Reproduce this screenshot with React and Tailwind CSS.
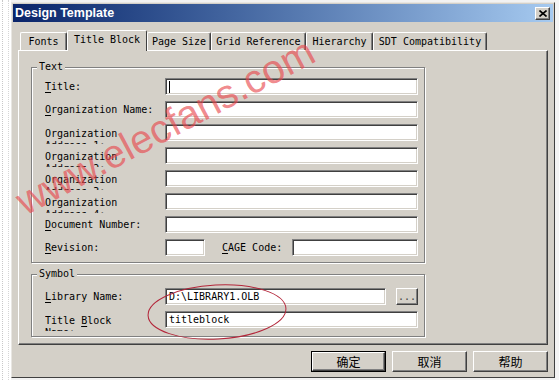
import React from "react";

const sunken =
  "bg-white border border-t-[#808080] border-l-[#808080] border-r-white border-b-white shadow-[inset_1px_1px_0_#404040,inset_-1px_-1px_0_#d4d0c8]";
const raised =
  "bg-[#d4d0c8] border border-t-white border-l-white border-r-[#404040] border-b-[#404040] shadow-[inset_-1px_-1px_0_#808080]";

function Field({ className = "", children }) {
  return (
    <div className={`h-[17px] flex items-center pl-[3px] overflow-hidden whitespace-nowrap ${sunken} ${className}`}>
      {children}
    </div>
  );
}

function Label({ children }) {
  return <div className="w-[120px] shrink-0 leading-[17px] whitespace-nowrap">{children}</div>;
}

function TwoLine({ first, second }) {
  return (
    <div className="w-[120px] shrink-0 h-[20px] -mb-[3px] pt-[4px] overflow-hidden leading-[12px] whitespace-nowrap">
      <div>{first}</div>
      <div>{second}</div>
    </div>
  );
}

function Row({ children }) {
  return <div className="flex items-start h-[17px]">{children}</div>;
}

function Group({ title, className = "", children }) {
  return (
    <div
      className={`relative border border-[#808080] shadow-[inset_1px_1px_0_#fff,1px_1px_0_#fff] pl-[13px] pr-[6px] ${className}`}
    >
      <div className="absolute -top-[7px] left-[5px] px-[2px] bg-[#d4d0c8] leading-[12px]">{title}</div>
      {children}
    </div>
  );
}

function Tab({ w, selected, children }) {
  if (selected)
    return (
      <div
        className={`${w} h-[21px] -mb-[1px] relative z-10 bg-[#d4d0c8] border-t border-l border-r border-t-white border-l-white border-r-[#404040] rounded-t-[2px] flex items-start justify-center pt-[2px] leading-[14px]`}
      >
        {children}
      </div>
    );
  return (
    <div
      className={`${w} h-[18px] bg-[#d4d0c8] border-t border-l border-r border-t-white border-l-white border-r-[#404040] shadow-[inset_-1px_0_0_#808080] rounded-t-[2px] flex items-start justify-center pt-[2px] leading-[14px]`}
    >
      {children}
    </div>
  );
}

function Btn({ def, children }) {
  if (def)
    return (
      <div className="w-[75px] h-[21px] border border-black">
        <div className={`w-full h-full flex items-center justify-center ${raised}`}>{children}</div>
      </div>
    );
  return <div className={`w-[75px] h-[21px] flex items-center justify-center ${raised}`}>{children}</div>;
}

export default function App() {
  return (
    <div className="relative w-[559px] h-[380px] overflow-hidden bg-[#f2f2f2] flex font-['DejaVu_Sans_Mono',monospace] text-[10px] text-black">
      {/* left dotted strip */}
      <div className="w-[11px] h-full bg-white flex justify-between px-[2px]">
        <div className="h-full border-l border-dotted border-[#c9c9c9]" />
        <div className="h-full border-l border-dotted border-[#d6d6d6]" />
      </div>

      {/* dialog */}
      <div className="w-[544px] h-[376px] mt-[2px] border border-t-[#e8e6e2] border-l-[#e8e6e2] border-r-[#404040] border-b-[#404040] bg-[#d4d0c8] p-[1px] flex flex-col">
        {/* title bar */}
        <div className="h-[18px] shrink-0 flex items-center justify-between bg-gradient-to-r from-[#0a246a] to-[#a6caf0] pl-[2px] pr-[3px]">
          <span className="font-['Liberation_Sans',sans-serif] font-bold text-[12.5px] text-white leading-[18px]">
            Design Template
          </span>
          <div className={`w-[15px] h-[13px] flex items-center justify-center ${raised}`}>
            <svg width="8" height="7" viewBox="0 0 8 7">
              <path d="M0.5 0.5 L7.5 6.5 M7.5 0.5 L0.5 6.5" stroke="#000" strokeWidth="1.6" fill="none" />
            </svg>
          </div>
        </div>

        <div className="px-[5px] flex flex-col">
          {/* tabs */}
          <div className="mt-[8px] h-[20px] flex items-end pl-[2px]">
            <Tab w="w-[47px]">Fonts</Tab>
            <Tab w="w-[80px]" selected>
              Title Block
            </Tab>
            <Tab w="w-[64px]">Page Size</Tab>
            <Tab w="w-[95px]">Grid Reference</Tab>
            <Tab w="w-[67px]">Hierarchy</Tab>
            <Tab w="w-[114px]">SDT Compatibility</Tab>
          </div>

          {/* panel */}
          <div className="h-[295px] border border-t-white border-l-white border-r-[#404040] border-b-[#404040] shadow-[inset_-1px_-1px_0_#808080] pl-[12px] pr-[122px]">
            <Group title="Text" className="mt-[16px] pt-[10px] pb-[6px]">
              <div className="flex flex-col gap-[6px]">
                <Row>
                  <Label>
                    <u className="underline-offset-2">T</u>itle:
                  </Label>
                  <Field className="flex-1">
                    <div className="w-[1px] h-[12px] bg-black" />
                  </Field>
                </Row>
                <Row>
                  <Label>
                    <u className="underline-offset-2">O</u>rganization Name:
                  </Label>
                  <Field className="flex-1" />
                </Row>
                <Row>
                  <TwoLine first="Organization" second="Address 1:" />
                  <Field className="flex-1" />
                </Row>
                <Row>
                  <TwoLine first="Organization" second="Address 2:" />
                  <Field className="flex-1" />
                </Row>
                <Row>
                  <TwoLine first="Organization" second="Address 3:" />
                  <Field className="flex-1" />
                </Row>
                <Row>
                  <TwoLine first="Organization" second="Address 4:" />
                  <Field className="flex-1" />
                </Row>
                <Row>
                  <Label>
                    <u className="underline-offset-2">D</u>ocument Number:
                  </Label>
                  <Field className="flex-1" />
                </Row>
                <Row>
                  <Label>
                    <u className="underline-offset-2">R</u>evision:
                  </Label>
                  <Field className="w-[40px]" />
                  <div className="ml-[17px] w-[70px] leading-[17px] whitespace-nowrap">
                    <u className="underline-offset-2">C</u>AGE Code:
                  </div>
                  <Field className="flex-1" />
                </Row>
              </div>
            </Group>

            <Group title="Symbol" className="mt-[11px] pt-[13px] pb-[8px]">
              <div className="flex flex-col gap-[6px]">
                <Row>
                  <Label>
                    <u className="underline-offset-2">L</u>ibrary Name:
                  </Label>
                  <Field className="flex-1">D:\LIBRARY1.OLB</Field>
                  <div className={`ml-[10px] w-[22px] h-[17px] flex items-center justify-center text-[#444] ${raised}`}>
                    ...
                  </div>
                </Row>
                <Row>
                  <TwoLine
                    first={
                      <>
                        Title <u className="underline-offset-2">B</u>lock
                      </>
                    }
                    second="Name:"
                  />
                  <Field className="flex-1">titleblock</Field>
                </Row>
              </div>
            </Group>
          </div>

          {/* buttons */}
          <div className="mt-[6px] flex justify-end gap-[6px] font-['Noto_Sans_CJK_SC',sans-serif] text-[12px]">
            <Btn def>确定</Btn>
            <Btn>取消</Btn>
            <Btn>帮助</Btn>
          </div>
        </div>
      </div>

      {/* right strip */}
      <div className="flex-1 h-full bg-[#f4f4f4]" />

      {/* watermark */}
      <div className="absolute left-[165px] top-[126px] -translate-x-1/2 -translate-y-1/2 -rotate-[28deg] whitespace-nowrap font-['Liberation_Sans',sans-serif] text-[40px] leading-none text-[#e8474c]/65 pointer-events-none">
        www.elecfans.com
      </div>

      {/* red ellipse annotation */}
      <svg className="absolute left-[146px] top-[282px] pointer-events-none" width="142" height="60" viewBox="0 0 142 60">
        <ellipse cx="71" cy="30" rx="69" ry="27" transform="rotate(-3 71 30)" fill="none" stroke="#b3263a" strokeWidth="1" />
      </svg>
    </div>
  );
}
